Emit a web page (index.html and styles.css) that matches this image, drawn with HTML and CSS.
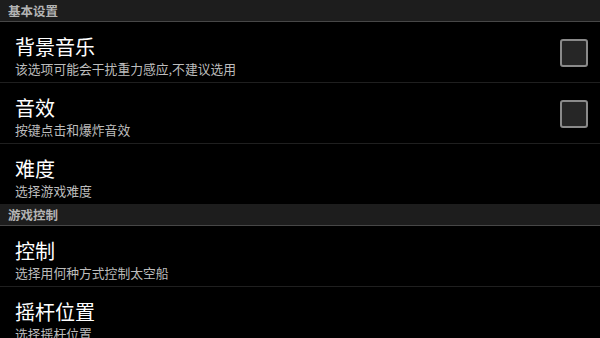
FILE: index.html
```html
<!DOCTYPE html>
<html lang="zh-CN">
<head>
<meta charset="utf-8">
<link rel="stylesheet" href="styles.css">
</head>
<body>
<div class="screen">
  <div class="category">基本设置</div>
  <div class="pref">
    <div class="text">
      <div class="title">背景音乐</div>
      <div class="summary">该选项可能会干扰重力感应,不建议选用</div>
    </div>
    <div class="checkbox"></div>
  </div>
  <div class="pref">
    <div class="text">
      <div class="title">音效</div>
      <div class="summary">按键点击和爆炸音效</div>
    </div>
    <div class="checkbox"></div>
  </div>
  <div class="pref last">
    <div class="text">
      <div class="title">难度</div>
      <div class="summary">选择游戏难度</div>
    </div>
  </div>
  <div class="category">游戏控制</div>
  <div class="pref">
    <div class="text">
      <div class="title">控制</div>
      <div class="summary">选择用何种方式控制太空船</div>
    </div>
  </div>
  <div class="pref">
    <div class="text">
      <div class="title">摇杆位置</div>
      <div class="summary">选择摇杆位置</div>
    </div>
  </div>
</div>
</body>
</html>
```
FILE: styles.css
```css
html, body {
  margin: 0;
  padding: 0;
  background: #000;
}
.screen {
  width: 600px;
  height: 338px;
  overflow: hidden;
  background: #000;
  font-family: "Noto Sans CJK SC", "Noto Sans", sans-serif;
  display: flex;
  flex-direction: column;
}
.category {
  flex: none;
  height: 21px;
  line-height: 22px;
  background: #1d1d1d;
  border-bottom: 1px solid #474747;
  color: #b4b4b4;
  font-size: 12.5px;
  font-weight: bold;
  padding-left: 8px;
}
.pref {
  flex: none;
  height: 60px;
  border-bottom: 1px solid #1f1f1f;
  display: flex;
  align-items: center;
  padding: 0 12px 0 15px;
}
.pref.last {
  border-bottom: none;
}
.text {
  flex: 1;
  display: flex;
  flex-direction: column;
  padding-top: 5px;
}
.title {
  color: #fff;
  font-size: 20px;
  line-height: 27px;
}
.summary {
  color: #bdbdbd;
  font-size: 12.8px;
  line-height: 17px;
}
.checkbox {
  flex: none;
  width: 24px;
  height: 24px;
  border: 2px solid #8a8a8a;
  border-radius: 3px;
  background: #262626;
  margin-top: 2px;
}
```
